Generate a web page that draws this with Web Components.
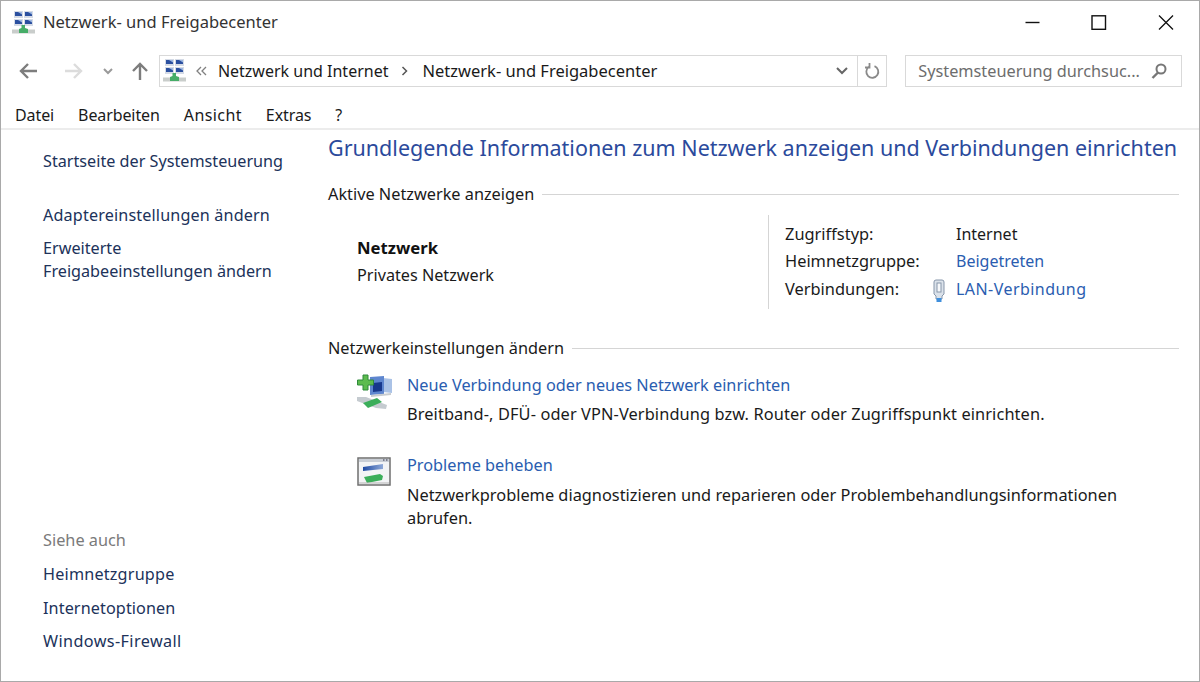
<!DOCTYPE html>
<html lang="de">
<head>
<meta charset="utf-8">
<title>Netzwerk- und Freigabecenter</title>
<style>
  html, body { margin: 0; height: 100%; background: #fff; }
  body { font: 16px/22px "Noto Sans", "Liberation Sans", sans-serif; color: #1a1a1a; overflow: hidden; }
</style>
</head>
<body>
<control-window>
  <window-titlebar slot="top">Netzwerk- und Freigabecenter</window-titlebar>
  <nav-bar slot="top"></nav-bar>
  <menu-bar slot="top"></menu-bar>
  <side-panel slot="side"></side-panel>
  <network-center></network-center>
</control-window>

<script>
const NET_ICON = `
  <svg class="net-icon" viewBox="0 0 24 24" width="24" height="24" aria-hidden="true" style="filter:blur(.35px)">
    <rect x="2" y="0" width="9" height="7" fill="#d5dbe6"/>
    <rect x="12" y="0" width="9" height="7" fill="#d5dbe6"/>
    <path d="M3 1h7v4H3zM13 1h7v4h-7z" fill="#2a4f9f"/>
    <path d="M6 1h4v2.500zM16 1h4v2.500z" fill="#9db7e0"/>
    <rect x="2" y="8" width="9" height="7" fill="#d5dbe6"/>
    <rect x="12" y="8" width="9" height="7" fill="#d5dbe6"/>
    <path d="M3 9h7v4H3zM13 9h7v4h-7z" fill="#2a4f9f"/>
    <path d="M6 9h4v2.500zM16 9h4v2.500z" fill="#9db7e0"/>
    <rect x="0" y="18.500" width="23" height="4" fill="#c9cdcb"/>
    <path d="M9.500 14h3.500v3l3 1v4H7v-4l2.500-1z" fill="#46ad68"/>
  </svg>`;

class ControlWindow extends HTMLElement {
  constructor() {
    super();
    this.attachShadow({ mode: 'open' });
    this.shadowRoot.innerHTML = `
      <style>
        :host {
          display: flex;
          flex-direction: column;
          box-sizing: border-box;
          height: 682px;
          border: 1px solid #a9a9a9;
          background: #fff;
        }
        .body { display: flex; flex: 1; min-height: 0; }
        .side { width: 327px; flex: none; }
        .main { flex: 1; min-width: 0; }
      </style>
      <slot name="top"></slot>
      <div class="body">
        <div class="side"><slot name="side"></slot></div>
        <div class="main"><slot></slot></div>
      </div>
    `;
  }
}

class WindowTitlebar extends HTMLElement {
  constructor() {
    super();
    this.attachShadow({ mode: 'open' });
    this.shadowRoot.innerHTML = `
      <style>
        :host { display: flex; align-items: center; height: 43px; flex: none; padding-left: 11px; }
        .title { margin: 0 0 2px 7px; font-size: 16.500px; color: #333; }
        .buttons { margin-left: auto; display: flex; padding-right: 21px; gap: 42px; align-items: center; }
        svg { display: block; }
      </style>
      ${NET_ICON}
      <span class="title"><slot></slot></span>
      <div class="buttons">
        <svg width="24" height="16" viewBox="0 0 24 16"><path d="M3.500 7.500h14" stroke="#111" stroke-width="1.400"/></svg>
        <svg width="24" height="16" viewBox="0 0 24 16"><rect x="4" y="0.800" width="13.500" height="13.500" fill="none" stroke="#111" stroke-width="1.400"/></svg>
        <svg width="24" height="16" viewBox="0 0 24 16"><path d="M5 0.500l14 14M19 0.500L5 14.500" stroke="#111" stroke-width="1.300" fill="none"/></svg>
      </div>
    `;
  }
}

class NavBar extends HTMLElement {
  constructor() {
    super();
    this.attachShadow({ mode: 'open' });
    this.shadowRoot.innerHTML = `
      <style>
        :host { display: flex; align-items: center; height: 54px; flex: none; padding: 0 17px 0 17px; }
        svg { display: block; flex: none; }
        .arrows { display: flex; align-items: center; width: 141px; }
        .back { margin-right: 26px; }
        .recent { margin: 0 18px 0 19px; }
        .address {
          box-sizing: border-box;
          display: flex;
          align-items: center;
          width: 729px;
          height: 32px;
          border: 1px solid #d9d9d9;
          padding-left: 3px;
        }
        .chevrons { margin: 0 11px 0 9px; }
        .crumb { color: #1a1a1a; white-space: nowrap; }
        .trail { font-size: 16.500px; }
        .sep { margin: 0 13px; }
        .drop { margin-left: auto; margin-right: 9px; }
        .refresh { width: 28px; height: 100%; border-left: 1px solid #d9d9d9; display: flex; align-items: center; justify-content: center; }
        .search {
          box-sizing: border-box;
          display: flex;
          align-items: center;
          justify-content: space-between;
          width: 277px;
          height: 32px;
          margin-left: 18px;
          border: 1px solid #d9d9d9;
          padding: 0 13px 0 12px;
          font-size: 16.300px;
          color: #6d6d6d;
          white-space: nowrap;
        }
      </style>
      <div class="arrows">
        <svg class="back" width="20" height="18" viewBox="0 0 20 18"><path d="M19 9H3M10 2L3 9l7 7" fill="none" stroke="#7d7d7d" stroke-width="2.400"/></svg>
        <svg width="20" height="18" viewBox="0 0 20 18"><path d="M1 9h16M10 2l7 7-7 7" fill="none" stroke="#dcdcdc" stroke-width="2.400"/></svg>
        <svg class="recent" width="10" height="7" viewBox="0 0 10 7"><path d="M1 1l4 4 4-4" fill="none" stroke="#9a9a9a" stroke-width="2"/></svg>
        <svg width="18" height="20" viewBox="0 0 18 20"><path d="M9 19V3M2 10l7-7 7 7" fill="none" stroke="#7d7d7d" stroke-width="2.400"/></svg>
      </div>
      <div class="address">
        ${NET_ICON}
        <svg class="chevrons" width="11" height="10" viewBox="0 0 11 10"><path d="M5 1L1 5l4 4M10 1L6 5l4 4" fill="none" stroke="#808080" stroke-width="1.300"/></svg>
        <span class="crumb">Netzwerk und Internet</span>
        <svg class="sep" width="8" height="10" viewBox="0 0 8 10"><path d="M1.500 1l4 4-4 4" fill="none" stroke="#555" stroke-width="1.500"/></svg>
        <span class="crumb trail">Netzwerk- und Freigabecenter</span>
        <svg class="drop" width="12" height="8" viewBox="0 0 12 8"><path d="M1 1l5 5 5-5" fill="none" stroke="#666" stroke-width="2"/></svg>
        <div class="refresh">
          <svg width="16" height="18" viewBox="0 0 16 18"><path d="M5 4.800A6 6 0 1 0 10.500 4.200M5.500 1v4.500H1" fill="none" stroke="#8a8a8a" stroke-width="1.800"/></svg>
        </div>
      </div>
      <div class="search">
        <span>Systemsteuerung durchsuc...</span>
        <svg width="18" height="18" viewBox="0 0 18 18"><circle cx="11" cy="7" r="4.500" fill="none" stroke="#777" stroke-width="2"/><path d="M8 10.500L2.500 16" stroke="#777" stroke-width="2.400"/></svg>
      </div>
    `;
  }
}

class MenuBar extends HTMLElement {
  constructor() {
    super();
    this.attachShadow({ mode: 'open' });
    this.shadowRoot.innerHTML = `
      <style>
        :host {
          display: flex;
          align-items: center;
          height: 26px;
          flex: none;
          padding: 4px 0 0 14px;
          gap: 24px;
          border-bottom: 2px solid #ececec;
        }
        .tight { letter-spacing: -0.1px; }
        .wide { letter-spacing: 0.4px; }
      </style>
      <span class="tight">Datei</span><span class="tight">Bearbeiten</span><span class="wide">Ansicht</span><span class="tight">Extras</span><span>?</span>
    `;
  }
}

class SideLink extends HTMLElement {
  constructor() {
    super();
    this.attachShadow({ mode: 'open' });
    this.shadowRoot.innerHTML = `
      <style>:host { display: block; color: #20325a; font-size: 16.200px; }</style>
      <slot></slot>
    `;
  }
}

class SidePanel extends HTMLElement {
  constructor() {
    super();
    this.attachShadow({ mode: 'open' });
    this.shadowRoot.innerHTML = `
      <style>
        :host { display: flex; flex-direction: column; height: 100%; padding: 20px 0 0 42px; box-sizing: border-box; }
        .group { display: flex; flex-direction: column; }
        .pair { line-height: 22.500px; }
        .bottom { margin-top: auto; margin-bottom: 29px; gap: 12px; }
        .caption { color: #7a7a7a; font-size: 16.300px; }
      </style>
      <div class="group" style="gap:32px">
        <side-link>Startseite der Systemsteuerung</side-link>
        <div class="group" style="gap:11px">
          <side-link style="letter-spacing:.14px">Adaptereinstellungen ändern</side-link>
          <side-link class="pair">Erweiterte<br>Freigabeeinstellungen ändern</side-link>
        </div>
      </div>
      <div class="group bottom">
        <span class="caption">Siehe auch</span>
        <side-link style="letter-spacing:.2px">Heimnetzgruppe</side-link>
        <side-link style="letter-spacing:.1px">Internetoptionen</side-link>
        <side-link style="letter-spacing:.4px;margin-top:-1px">Windows-Firewall</side-link>
      </div>
    `;
  }
}

class SectionHead extends HTMLElement {
  constructor() {
    super();
    this.attachShadow({ mode: 'open' });
    this.shadowRoot.innerHTML = `
      <style>
        :host { display: flex; align-items: center; gap: 8px; font-size: 16.300px; }
        i { flex: 1; height: 1px; background: #d5d5d5; }
      </style>
      <span><slot></slot></span><i></i>
    `;
  }
}

class TaskItem extends HTMLElement {
  constructor() {
    super();
    this.attachShadow({ mode: 'open' });
    this.shadowRoot.innerHTML = `
      <style>
        :host { display: flex; gap: 15px; padding-left: 29px; font-size: 16.350px; }
        .icon { width: 35px; flex: none; }
        .link { color: #2a5db0; display: block; line-height: 22px; margin-bottom: var(--link-gap, 7px); font-size: 16.280px; }
        .text { line-height: 23px; width: 735px; }
      </style>
      <div class="icon"><slot name="icon"></slot></div>
      <div>
        <span class="link"><slot name="link"></slot></span>
        <div class="text"><slot></slot></div>
      </div>
    `;
  }
}

class NetworkCenter extends HTMLElement {
  constructor() {
    super();
    this.attachShadow({ mode: 'open' });
    this.shadowRoot.innerHTML = `
      <style>
        :host { display: block; padding: 3px 20px 0 0; }
        h1 { margin: 0; font-size: 21.500px; font-weight: 400; line-height: 30px; color: #2b4a9c; white-space: nowrap; }
        section-head { margin-top: 20px; }
        .active { display: flex; height: 94px; margin-top: 10px; }
        .net { width: 440px; padding: 19px 0 0 29px; box-sizing: border-box; line-height: 27px; font-size: 16.200px; }
        .net b { display: block; font-weight: 700; color: #111; font-size: 16.700px; margin-bottom: 1px; }
        .facts {
          border-left: 1px solid #d5d5d5;
          padding: 5px 0 0 16px;
          display: grid;
          grid-template-columns: 171px auto;
          grid-auto-rows: 27.500px;
          align-items: center;
        }
        .facts span.label { font-size: 16.400px; }
        .facts a { color: #2a5db0; display: flex; align-items: center; position: relative; }
        .lan { position: absolute; left: -24px; top: 1px; }
        .wide { letter-spacing: .45px; }
        .tasks { display: flex; flex-direction: column; gap: 28px; margin-top: 15px; }
        section-head.second { margin-top: 28px; }
        svg { display: block; }
      </style>
      <h1>Grundlegende Informationen zum Netzwerk anzeigen und Verbindungen einrichten</h1>
      <section-head>Aktive Netzwerke anzeigen</section-head>
      <div class="active">
        <div class="net"><b>Netzwerk</b>Privates Netzwerk</div>
        <div class="facts">
          <span class="label">Zugriffstyp:</span><span>Internet</span>
          <span class="label">Heimnetzgruppe:</span><a>Beigetreten</a>
          <span class="label">Verbindungen:</span>
          <a class="wide">
            <svg class="lan" width="14" height="24" viewBox="0 0 14 24" style="filter:blur(.3px)"><path d="M2 3q0-2 2-2h6q2 0 2 2v12l-2 2v3H4v-3l-2-2z" fill="#dbe2ea" stroke="#8796aa"/><rect x="5" y="4" width="4" height="9" fill="#f7f9fb" stroke="#8796aa"/><path d="M4.500 19h5v4h-5z" fill="#3f8fdc"/></svg>
            LAN-Verbindung
          </a>
        </div>
      </div>
      <section-head class="second">Netzwerkeinstellungen ändern</section-head>
      <div class="tasks">
        <task-item style="letter-spacing:.11px">
          <svg slot="icon" width="36" height="36" viewBox="0 0 36 36" style="filter:blur(.45px)">
            <path d="M26 4l9 1v14l-9-1z" fill="#aac2e6"/>
            <path d="M13 3l14-1v18l-14 1z" fill="#5e86cf"/>
            <path d="M16 9l9-1v9l-9 1z" fill="#17388c"/>
            <path d="M14 21l20-2v2l-20 2z" fill="#c8ccd0"/>
            <path d="M6 1h5v5h5.500v5H11v5H6v-5H.500V6H6z" fill="#5dbb4e" stroke="#2f8a3a"/>
            <path d="M0 23l9 0 21 8-1 4-10-1L0 27z" fill="#c5cbd0"/>
            <path d="M6 29l14-5 5 4-14 6z" fill="#3bae5a"/>
          </svg>
          <span slot="link" style="letter-spacing:0">Neue Verbindung oder neues Netzwerk einrichten</span>
          Breitband-, DFÜ- oder VPN-Verbindung bzw. Router oder Zugriffspunkt einrichten.
        </task-item>
        <task-item style="--link-gap:8px">
          <svg slot="icon" width="34" height="30" viewBox="0 0 34 30" style="filter:blur(.4px);margin-top:3px">
            <defs><linearGradient id="fade"><stop offset="0" stop-color="#1f4aa3"/><stop offset="1" stop-color="#8fa9d8"/></linearGradient></defs>
            <rect x="1" y="1" width="32" height="27" fill="#f3f4f6" stroke="#6f6f6f" stroke-width="1.500"/>
            <rect x="2" y="2" width="30" height="3" fill="#c9ced6"/>
            <path d="M26 3h1.500M29 3h1.500" stroke="#667" stroke-width="1.500"/>
            <path d="M6 10l20-3v5l-20 2z" fill="url(#fade)"/>
            <path d="M7 20l16-3 3 2-1 4-15 3z" fill="#3bae5a"/>
            <path d="M2 26h30" stroke="#b5b5b5"/>
          </svg>
          <span slot="link">Probleme beheben</span>
          Netzwerkprobleme diagnostizieren und reparieren oder Problembehandlungsinformationen abrufen.
        </task-item>
      </div>
    `;
  }
}

customElements.define('control-window', ControlWindow);
customElements.define('window-titlebar', WindowTitlebar);
customElements.define('nav-bar', NavBar);
customElements.define('menu-bar', MenuBar);
customElements.define('side-link', SideLink);
customElements.define('side-panel', SidePanel);
customElements.define('section-head', SectionHead);
customElements.define('task-item', TaskItem);
customElements.define('network-center', NetworkCenter);
</script>
</body>
</html>
